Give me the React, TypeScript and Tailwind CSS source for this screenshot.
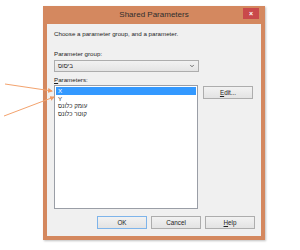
import { ChevronDown } from 'lucide-react'

const font = { fontFamily: '"Liberation Sans", "Noto Sans", sans-serif' }

function WinButton({ children, primary }: { children: React.ReactNode; primary?: boolean }) {
  return (
    <div
      className={`flex h-[13px] w-[50px] items-center justify-center border bg-gradient-to-b from-[#f2f2f2] to-[#e3e3e3] text-[6.3px] text-[#222] ${
        primary ? 'border-[#7eb4ea]' : 'border-[#adadad]'
      }`}
    >
      {children}
    </div>
  )
}

export default function App() {
  const items = ['X', 'Y', 'עומק כלונס', 'קוטר כלונס']

  return (
    <div className="relative h-[250px] w-[300px] overflow-hidden bg-white" style={font}>
      {/* dialog window */}
      <div className="ml-[43px] mt-[6px] flex h-[234px] w-[222px] flex-col bg-[#d4885f] px-[4px] pb-[4px] shadow-[1px_1px_2px_rgba(0,0,0,0.25)]">
        <div className="relative flex h-[18px] items-center justify-center">
          <span className="text-[8px] text-[#2e2e2e]">Shared Parameters</span>
          <div className="absolute right-[2px] top-[2px] flex h-[11px] w-[16px] items-center justify-center bg-[#c9494b]">
            <span className="text-[7px] font-bold leading-none text-white">×</span>
          </div>
        </div>

        <div className="flex flex-1 flex-col bg-[#f0f0f0] pl-[7px] pr-[6px] pt-[6px] text-[6.2px] text-[#1e1e1e]">
          <div className="h-[8px] leading-[8px]">Choose a parameter group, and a parameter.</div>

          <div className="mt-[12px] h-[8px] leading-[8px]">Parameter group:</div>
          <div className="mt-[2px] flex h-[12px] w-[145px] items-center justify-between border border-[#adadad] bg-gradient-to-b from-[#f2f2f2] to-[#e4e4e4] pl-[3px] pr-[3px]">
            <span>ביסוס</span>
            <ChevronDown className="h-[6px] w-[6px] text-[#444]" strokeWidth={3} />
          </div>

          <div className="mt-[4px] h-[8px] leading-[8px]">
            <span className="underline">P</span>arameters:
          </div>

          <div className="mt-[1px] flex items-start gap-[5px]">
            <div className="h-[124px] w-[144px] border border-[#9a9ea6] bg-white p-[1px]">
              {items.map((item, i) => (
                <div
                  key={item}
                  className={`h-[7.5px] pl-[2px] leading-[7.5px] ${
                    i === 0 ? 'bg-[#3399ff] text-white' : 'text-[#1e1e1e]'
                  }`}
                >
                  {item}
                </div>
              ))}
            </div>
            <div className="mt-[1px]">
              <WinButton>
                <span className="underline">E</span>dit...
              </WinButton>
            </div>
          </div>

          <div className="mt-[7px] flex justify-end gap-[4px]">
            <WinButton primary>OK</WinButton>
            <WinButton>Cancel</WinButton>
            <WinButton>
              <span className="underline">H</span>elp
            </WinButton>
          </div>
        </div>
      </div>

      {/* annotation arrows */}
      <svg className="absolute left-0 top-0" width="300" height="250" viewBox="0 0 300 250">
        <defs>
          <marker id="ah" markerWidth="5" markerHeight="5" refX="4" refY="2.5" orient="auto">
            <path d="M0,0 L5,2.5 L0,5 z" fill="#f09a62" />
          </marker>
        </defs>
        <line x1="5" y1="84" x2="52" y2="91" stroke="#f3a36e" strokeWidth="1" markerEnd="url(#ah)" />
        <line x1="4" y1="116" x2="54" y2="97" stroke="#f3a36e" strokeWidth="1" markerEnd="url(#ah)" />
      </svg>
    </div>
  )
}
